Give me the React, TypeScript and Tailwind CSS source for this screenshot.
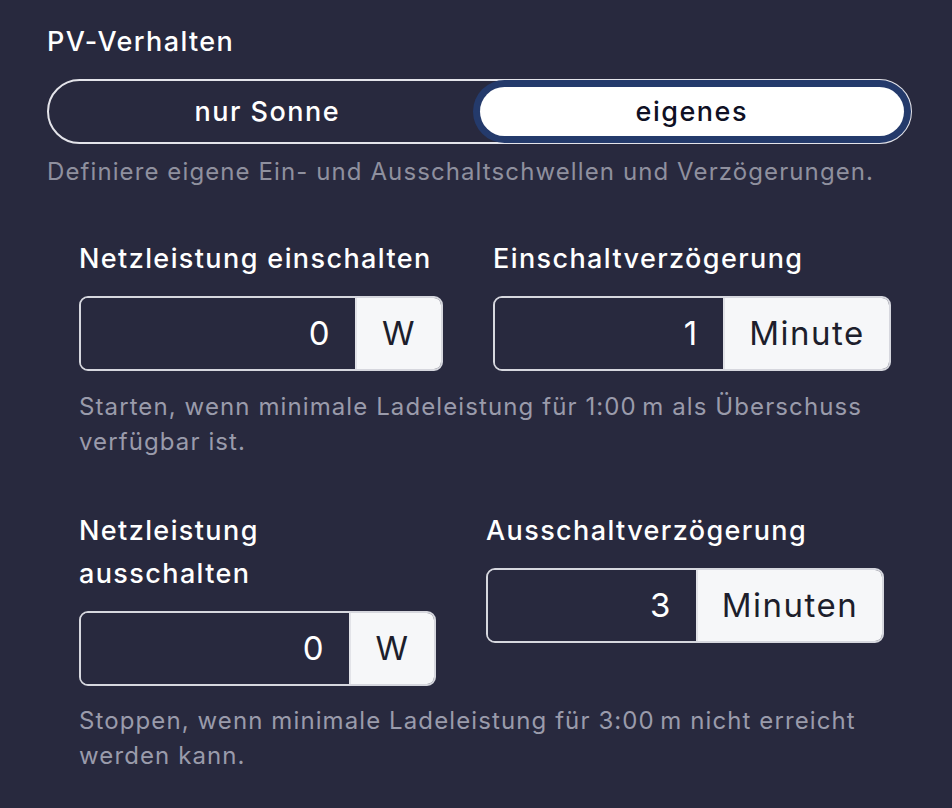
import React from 'react'

const font = { fontFamily: 'Inter, "Noto Sans", sans-serif' }

function UnitInput({
  value,
  unit,
  valueW,
  unitW,
}: {
  value: string
  unit: string
  valueW: string
  unitW: string
}) {
  return (
    <div className="flex h-[75px] overflow-hidden rounded-[9px] border-2 border-[#d6d7de]">
      <div
        className={`${valueW} flex items-center justify-end bg-[#28293e] pr-[24px] text-[33px] tracking-[1.5px] text-white`}
      >
        {value}
      </div>
      <div
        className={`${unitW} flex items-center justify-center border-l-2 border-[#e2e3e8] bg-[#f6f7f9] text-[33px] tracking-[1.5px] text-[#1d1e2c]`}
      >
        {unit}
      </div>
    </div>
  )
}

const labelCls = 'block text-[27px] font-medium leading-[43px] tracking-[1.4px] text-white'
const helpCls = 'whitespace-nowrap text-[24px] leading-[35px] tracking-[1.1px] text-[#9a9bab]'

export default function App() {
  return (
    <div className="min-h-[808px] w-[952px] bg-[#28293e] pl-[47px] pr-[40px] pt-[22px]" style={font}>
      <h2 className="text-[27px] font-medium leading-[40px] tracking-[1.4px] text-white">
        PV-Verhalten
      </h2>

      <div className="mt-[17px] flex rounded-full border-2 border-[#e4e4ea] p-[6px]">
        <button className="h-[49px] flex-1 rounded-full pt-[2px] text-[27px] font-medium tracking-[1.5px] text-white">
          nur Sonne
        </button>
        <button className="h-[49px] flex-1 rounded-full bg-white pt-[2px] text-[27px] font-medium tracking-[1.5px] text-[#0f1024] shadow-[0_0_0_7px_#243a6b]">
          eigenes
        </button>
      </div>

      <p className="mt-[10px] whitespace-nowrap text-[24px] leading-[35px] tracking-[1.1px] text-[#8f909e]">
        Definiere eigene Ein- und Ausschaltschwellen und Verzögerungen.
      </p>

      <div className="px-[32px]">
        <div className="mt-[48px] flex gap-[50px]">
          <div className="w-[364px]">
            <label className={labelCls}>Netzleistung einschalten</label>
            <div className="mt-[16px]">
              <UnitInput value="0" unit="W" valueW="w-[277px]" unitW="w-[87px]" />
            </div>
          </div>
          <div className="w-[398px]">
            <label className={labelCls}>Einschaltverzögerung</label>
            <div className="mt-[16px]">
              <UnitInput value="1" unit="Minute" valueW="w-[230px]" unitW="w-[168px]" />
            </div>
          </div>
        </div>
        <p className={`mt-[18px] ${helpCls}`}>
          Starten, wenn minimale Ladeleistung für 1:00&thinsp;m als Überschuss
          <br />
          verfügbar ist.
        </p>

        <div className="mt-[50px] flex gap-[50px]">
          <div className="w-[357px]">
            <label className={labelCls}>
              Netzleistung
              <br />
              ausschalten
            </label>
            <div className="mt-[16px]">
              <UnitInput value="0" unit="W" valueW="w-[271px]" unitW="w-[86px]" />
            </div>
          </div>
          <div className="w-[398px]">
            <label className={labelCls}>Ausschaltverzögerung</label>
            <div className="mt-[16px]">
              <UnitInput value="3" unit="Minuten" valueW="w-[210px]" unitW="w-[188px]" />
            </div>
          </div>
        </div>
        <p className={`mt-[17px] ${helpCls}`}>
          Stoppen, wenn minimale Ladeleistung für 3:00&thinsp;m nicht erreicht
          <br />
          werden kann.
        </p>
      </div>
    </div>
  )
}
